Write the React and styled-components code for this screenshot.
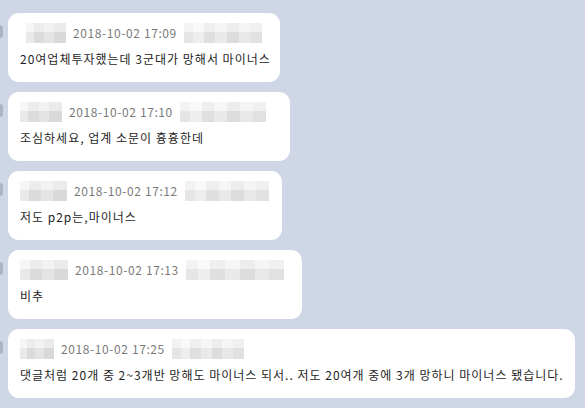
import React from "react";
import styled, { createGlobalStyle } from "styled-components";

const GlobalStyle = createGlobalStyle`
  html, body {
    margin: 0;
    padding: 0;
    background: #cfd7e7;
  }
  body {
    font-family: "Noto Sans CJK KR", "Noto Sans", sans-serif;
  }
`;

const messages = [
  { time: "2018-10-02 17:09", text: "20여업체투자했는데 3군대가 망해서 마이너스", width: 272, lead: 6, name: 40, tail: 78 },
  { time: "2018-10-02 17:10", text: "조심하세요, 업계 소문이 흉흉한데", width: 282, lead: 0, name: 42, tail: 86 },
  { time: "2018-10-02 17:12", text: "저도 p2p는,마이너스", width: 274, lead: 0, name: 47, tail: 84 },
  { time: "2018-10-02 17:13", text: "비추", width: 294, lead: 0, name: 48, tail: 98 },
  { time: "2018-10-02 17:25", text: "댓글처럼 20개 중 2~3개반 망해도 마이너스 되서.. 저도 20여개 중에 3개 망하니 마이너스 됐습니다.", width: 567, lead: 0, name: 34, tail: 72 },
];

function Chat() {
  return (
    <List>
      {messages.map((m, i) => (
        <Row key={i}>
          <AvatarEdge />
          <Bubble $width={m.width}>
            <Header>
              <Mosaic $w={m.name} $lead={m.lead} />
              <Time>{m.time}</Time>
              <Mosaic $w={m.tail} $alt />
            </Header>
            <Text>{m.text}</Text>
          </Bubble>
        </Row>
      ))}
    </List>
  );
}

export default function App() {
  return (
    <>
      <GlobalStyle />
      <Chat />
    </>
  );
}

const List = styled.div`
  display: flex;
  flex-direction: column;
  gap: 10px;
  padding-top: 13px;
`;

const Row = styled.div`
  display: flex;
  align-items: flex-start;
`;

const AvatarEdge = styled.div`
  width: 3px;
  height: 13px;
  margin-top: 12px;
  border-radius: 0 3px 3px 0;
  background: #aeb5c2;
  flex-shrink: 0;
`;

const Bubble = styled.div`
  width: ${(p) => p.$width}px;
  margin-left: 5px;
  box-sizing: border-box;
  background: #ffffff;
  border-radius: 11px;
  padding: 10px 8px 15px 12px;
  display: flex;
  flex-direction: column;
  gap: 8px;
`;

const Header = styled.div`
  display: flex;
  align-items: center;
  gap: 7px;
  height: 20px;
`;

const Mosaic = styled.div`
  width: ${(p) => p.$w}px;
  margin-left: ${(p) => p.$lead || 0}px;
  height: 20px;
  flex-shrink: 0;
  background:
    linear-gradient(180deg, rgba(255,255,255,0.35) 0 45%, rgba(0,0,0,0.03) 45% 100%),
    ${(p) =>
      p.$alt
        ? "linear-gradient(90deg, #ececec 0 12%, #f6f6f6 12% 25%, #e6e6e6 25% 40%, #f1f1f1 40% 55%, #e3e3e3 55% 70%, #efefef 70% 85%, #e8e8e8 85% 100%)"
        : "linear-gradient(90deg, #f1f1f1 0 20%, #e2e2e2 20% 45%, #ebebeb 45% 70%, #e0e0e0 70% 100%)"};
`;

const Time = styled.span`
  font-size: 12px;
  color: #7a7a7a;
  white-space: nowrap;
  line-height: 20px;
  letter-spacing: 0.6px;
`;

const Text = styled.div`
  font-size: 12px;
  color: #1e1e1e;
  line-height: 16px;
  white-space: nowrap;
  letter-spacing: 1px;
`;
